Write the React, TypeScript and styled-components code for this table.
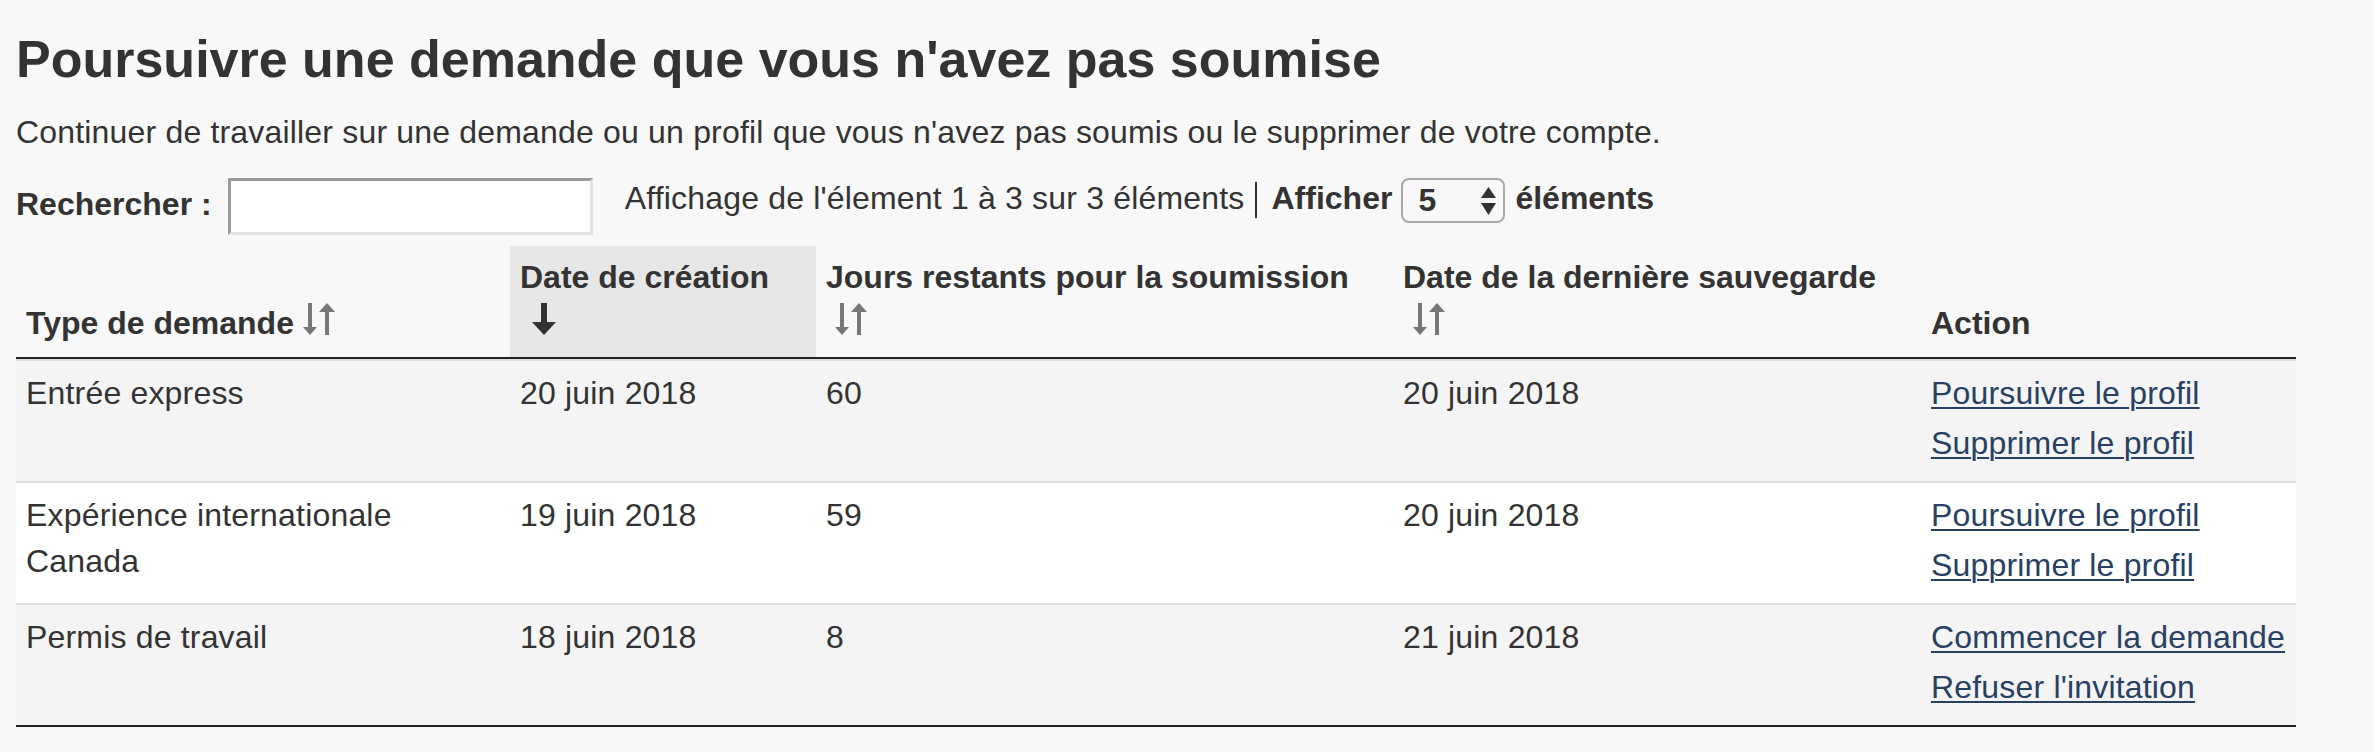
import * as React from 'react'
import styled, { createGlobalStyle } from 'styled-components'

const GlobalStyle = createGlobalStyle`
  html, body {
    margin: 0;
    padding: 0;
    background: #f8f8f8;
  }
  body {
    font-family: 'Liberation Sans', Arial, Helvetica, sans-serif;
    font-size: 32px;
    line-height: 46px;
    letter-spacing: 0.18px;
    color: #333;
  }
`

const Page = styled.main`
  width: 2280px;
  padding: 31px 0 0 16px;
`

const Title = styled.h2`
  margin: 0;
  font-size: 52px;
  line-height: 56px;
  font-weight: 700;
  letter-spacing: 0;
`

const Intro = styled.p`
  margin: 22px 0 0;
`

const Controls = styled.div`
  display: flex;
  align-items: flex-start;
  height: 60px;
  margin-top: 20px;
`

const SearchLabel = styled.label`
  font-weight: 700;
  letter-spacing: 0;
  margin: 6px 16px 0 0;
`

const SearchInput = styled.input`
  box-sizing: border-box;
  width: 365px;
  height: 57px;
  margin: 3px 0 0;
  padding: 0 8px;
  border: 3px solid;
  border-color: #9a9a9a #e2e2e2 #e2e2e2 #9a9a9a;
  background: #fff;
  font: inherit;
  color: #333;
`

const Info = styled.div`
  display: flex;
  align-items: flex-start;
  margin-left: 32px;
`

const Divider = styled.span`
  width: 2px;
  height: 36px;
  margin: 7px 15px 0 10px;
  background: #333;
`

const Strong = styled.span`
  font-weight: 700;
  letter-spacing: 0;
`

const SelectWrap = styled.div`
  position: relative;
  margin: 3px 10px 0 9px;
`

const LengthSelect = styled.select`
  appearance: none;
  box-sizing: border-box;
  display: block;
  width: 104px;
  height: 45px;
  margin: 0;
  padding: 0 0 0 15px;
  border: 2px solid #aaa;
  border-radius: 8px;
  background: transparent;
  font: 700 32px/41px 'Liberation Sans', Arial, sans-serif;
  color: #333;
`

const SelectArrows = styled.svg`
  position: absolute;
  right: 9px;
  top: 9px;
  pointer-events: none;
`

const Table = styled.table`
  width: 2280px;
  margin-top: 11px;
  border-collapse: separate;
  border-spacing: 0;
  table-layout: fixed;
  border-bottom: 2px solid #222;
`

const Col = styled.col<{ $w: number }>`
  width: ${(p) => p.$w}px;
`

const Th = styled.th<{ $sorted?: boolean }>`
  padding: 8px 10px 11px;
  text-align: left;
  vertical-align: bottom;
  font-weight: 700;
  letter-spacing: 0;
  border-bottom: 2px solid #222;
  background: ${(p) => (p.$sorted ? '#e7e7e7' : 'transparent')};
`

const Row = styled.tr<{ $striped?: boolean }>`
  background: ${(p) => (p.$striped ? '#f4f4f4' : '#fff')};
`

const Td = styled.td`
  padding: 9px 10px 7px;
  vertical-align: top;
  border-top: 2px solid #ddd;
`

const Actions = styled.div`
  display: flex;
  flex-direction: column;
  align-items: flex-start;
  gap: 4px;
  padding-bottom: 8px;
`

const ActionLink = styled.a`
  color: #284162;
  text-decoration: underline;
  text-decoration-thickness: 2px;
  text-underline-offset: 3px;
`

const IconLine = styled.span<{ $indent: number }>`
  display: block;
  padding-left: ${(p) => p.$indent}px;
`

const SortSvg = styled.svg`
  vertical-align: -1px;
`

const SortBoth = () => (
  <SortSvg width="32" height="32" viewBox="0 0 32 32" fill="#777" aria-hidden="true">
    <rect x="5" y="0" width="4" height="25" />
    <polygon points="0,24 14,24 7,32" />
    <rect x="22" y="8" width="4" height="24" />
    <polygon points="16,9 32,9 24,0" />
  </SortSvg>
)

const SortDown = () => (
  <SortSvg width="24" height="32" viewBox="0 0 24 32" fill="#333" aria-hidden="true">
    <rect x="9" y="0" width="6" height="20" />
    <polygon points="0,19 24,19 12,32" />
  </SortSvg>
)

type Demande = {
  type: string
  created: string
  days: string
  saved: string
  actions: string[]
}

const rows: Demande[] = [
  {
    type: 'Entrée express',
    created: '20 juin 2018',
    days: '60',
    saved: '20 juin 2018',
    actions: ['Poursuivre le profil', 'Supprimer le profil'],
  },
  {
    type: 'Expérience internationale Canada',
    created: '19 juin 2018',
    days: '59',
    saved: '20 juin 2018',
    actions: ['Poursuivre le profil', 'Supprimer le profil'],
  },
  {
    type: 'Permis de travail',
    created: '18 juin 2018',
    days: '8',
    saved: '21 juin 2018',
    actions: ['Commencer la demande', "Refuser l'invitation"],
  },
]

const App: React.FC = () => {
  return (
    <>
      <GlobalStyle />
      <Page>
        <Title>Poursuivre une demande que vous n'avez pas soumise</Title>
        <Intro>
          Continuer de travailler sur une demande ou un profil que vous n'avez pas soumis ou le
          supprimer de votre compte.
        </Intro>

        <Controls>
          <SearchLabel htmlFor="recherche">Rechercher :</SearchLabel>
          <SearchInput id="recherche" type="search" />
          <Info>
            <span>Affichage de l'élement 1 à 3 sur 3 éléments</span>
            <Divider />
            <Strong>Afficher</Strong>
            <SelectWrap>
              <LengthSelect defaultValue="5">
                <option value="5">5</option>
                <option value="10">10</option>
                <option value="25">25</option>
              </LengthSelect>
              <SelectArrows width="15" height="28" viewBox="0 0 15 28" fill="#333">
                <polygon points="7.5,0 15,11 0,11" />
                <polygon points="0,16 15,16 7.5,28" />
              </SelectArrows>
            </SelectWrap>
            <Strong>éléments</Strong>
          </Info>
        </Controls>

        <Table>
          <colgroup>
            <Col $w={494} />
            <Col $w={306} />
            <Col $w={577} />
            <Col $w={528} />
            <Col $w={375} />
          </colgroup>
          <thead>
            <tr>
              <Th>
                Type de demande <SortBoth />
              </Th>
              <Th $sorted>
                Date de création
                <IconLine $indent={12}>
                  <SortDown />
                </IconLine>
              </Th>
              <Th>
                Jours restants pour la soumission
                <IconLine $indent={9}>
                  <SortBoth />
                </IconLine>
              </Th>
              <Th>
                Date de la dernière sauvegarde
                <IconLine $indent={10}>
                  <SortBoth />
                </IconLine>
              </Th>
              <Th>Action</Th>
            </tr>
          </thead>
          <tbody>
            {rows.map((r, i) => (
              <Row key={r.type} $striped={i % 2 === 0}>
                <Td>{r.type}</Td>
                <Td>{r.created}</Td>
                <Td>{r.days}</Td>
                <Td>{r.saved}</Td>
                <Td>
                  <Actions>
                    {r.actions.map((a) => (
                      <ActionLink key={a} href="#">
                        {a}
                      </ActionLink>
                    ))}
                  </Actions>
                </Td>
              </Row>
            ))}
          </tbody>
        </Table>
      </Page>
    </>
  )
}

export default App
